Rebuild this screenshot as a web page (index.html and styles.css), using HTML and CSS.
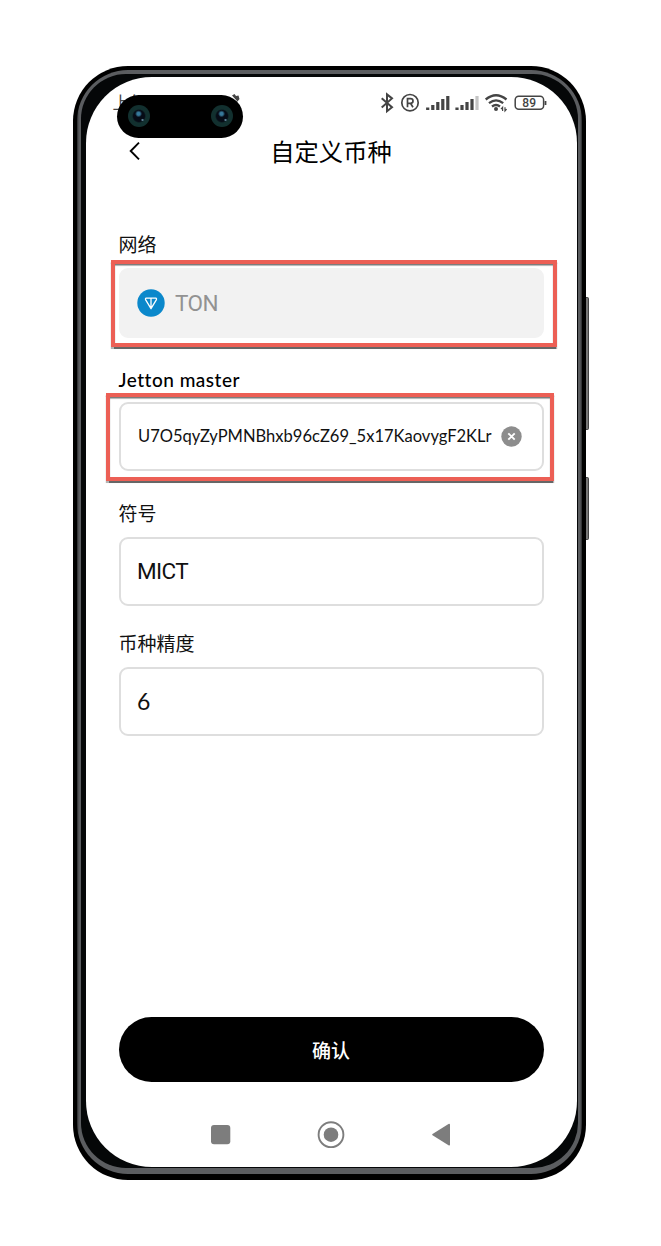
FILE: index.html
```
<!DOCTYPE html>
<html lang="zh-CN">
<head>
<meta charset="utf-8">
<title>自定义币种</title>
<link rel="stylesheet" href="styles.css">
</head>
<body>
<div class="device">
  <span class="side-key volume"></span>
  <span class="side-key power"></span>
  <div class="band"><div class="bezel"><main class="screen">
    <div class="status">
      <span class="clock">上午</span>
      <svg class="bell" width="10" height="10" viewBox="0 0 10 10"><path d="M1 1.5 3.5 0 5 2 7.5 1.5 8.5 5 6.5 7.5Z" fill="#444"/></svg>
      <div class="cutout">
        <span class="lens"></span><span class="lens"></span>
      </div>
      <svg class="status-icons" width="168" height="22" viewBox="380 92 168 22" fill="none" stroke="#444" stroke-width="1.7">
        <path d="M381.7 98.2 392 107.3 387 111.2V94.4L392 98.4 381.7 107.5" stroke-width="2"/>
        <circle cx="410" cy="102.7" r="8.2"/>
        <path d="M407.5 107.2V98.7H410.5Q413 98.7 413 101T410.5 103.3H407.5M410.5 103.3 413 107.2"/>
        <g stroke-width="3.2">
          <path d="M427.7 110V107.5M432.8 110V105M437.8 110V102M442.8 110V99M447.8 110V96"/>
          <path d="M457 110V107.5M462 110V105M467 110V102M472 110V99"/>
          <path d="M477 110V96" stroke="#c4c4c4"/>
        </g>
        <g stroke-width="2.3">
          <path d="M485.7 99.5Q496 91 506.5 99.5M489 103.2Q496 97.5 503.2 103.2M492 106.5Q496 103.5 500 106.5"/>
        </g>
        <circle cx="496" cy="109" r="2" fill="#444" stroke="none"/>
        <path d="M502.6 111V107.3L501 109.2M505 107.3V111L506.6 109.2" stroke-width="1.2"/>
        <rect x="515.2" y="96.2" width="28.4" height="13" rx="3.5" stroke-width="1.5"/>
        <path d="M545.5 101V105" stroke-width="1.8"/>
        <text class="battery" x="529.3" y="107" text-anchor="middle">89</text>
      </svg>
    </div>
    <header class="header">
      <svg class="back" width="12" height="20" viewBox="0 0 12 20"><path d="M10 1.7 1.7 10 10 18.3" fill="none" stroke="#000" stroke-width="1.9"/></svg>
      <h1 class="title">自定义币种</h1>
    </header>
    <form class="form">
      <label class="label">网络</label>
      <div class="field disabled">
        <svg width="28" height="28" viewBox="0 0 28 28"><circle cx="14" cy="14" r="13.7" fill="#0b88cb"/><path d="M9.3 9.2H18.7Q20 9.5 19.3 10.9L14 19.7 8.7 10.9Q8 9.5 9.3 9.2ZM14 9.2V19" fill="none" stroke="#fff" stroke-width="1.3" stroke-linejoin="round"/></svg>
        <span class="network">TON</span>
        <span class="highlight first"></span>
      </div>
      <label class="label latin">Jetton master</label>
      <div class="field master">
        <span class="address">U7O5qyZyPMNBhxb96cZ69_5x17KaovygF2KLr</span>
        <svg class="clear" width="21" height="21" viewBox="0 0 21 21"><circle cx="10.5" cy="10.5" r="10.2" fill="#8d8d8d"/><path d="M7.3 7.3 13.7 13.7M13.7 7.3 7.3 13.7" stroke="#fff" stroke-width="1.9"/></svg>
        <span class="highlight second"></span>
      </div>
      <label class="label">符号</label>
      <div class="field short"><span class="symbol">MICT</span></div>
      <label class="label">币种精度</label>
      <div class="field short"><span class="digits">6</span></div>
      <button class="confirm" type="button">确认</button>
    </form>
    <nav class="nav">
      <svg width="242" height="28" viewBox="0 0 242 28" fill="#7d7d7d"><rect x="2" y="4" width="19.3" height="19.3" rx="3"/><circle cx="122" cy="13.7" r="12.4" fill="none" stroke="#7d7d7d" stroke-width="1.9"/><circle cx="122" cy="13.7" r="7.3"/><path d="M223.5 13.1 239.5 3Q241 2.4 241 4V23.4Q241 25 239.5 24.3L223.5 14.3Q222.7 13.7 223.5 13.1Z"/></svg>
    </nav>
  </main></div></div>
</div>
</body>
</html>
```
FILE: styles.css
```
* { box-sizing: border-box; }
body {
  margin: 0;
  padding: 66px 0 0 73px;
  background: #fff;
  color: #111;
  font-family: Lato, "Noto Sans CJK SC", sans-serif;
}
.device {
  position: relative;
  width: 513px;
  height: 1114px;
  padding: 3.5px 4.5px 6px 4px;
  border-radius: 55px;
  background: #000;
}
.side-key {
  position: absolute;
  right: -3px;
  width: 3px;
  border: 1px solid #444;
  border-left: 0;
  border-radius: 0 2px 2px 0;
  background: #777;
}
.volume { top: 231px; height: 133px; }
.power { top: 411px; height: 63px; }
.band {
  height: 100%;
  padding: 4.5px 4px 6px;
  border-radius: 51px;
  background: linear-gradient(90deg, #27282a, #5b5d60 2px, #5b5d60 calc(100% - 2px), #27282a);
}
.bezel {
  height: 100%;
  padding: 2.5px 1px 1px 4.5px;
  border-radius: 45px;
  background: #050708;
}
.screen {
  display: flex;
  flex-direction: column;
  height: 100%;
  border-radius: 66px;
  background: #fff;
}
.status {
  position: relative;
  display: flex;
  justify-content: flex-end;
  height: 52px;
  padding: 15px 29px 0 0;
}
.clock {
  position: absolute;
  left: 27px;
  top: 14px;
  color: #444;
  font-size: 17px;
  line-height: 24px;
}
.bell { position: absolute; left: 145px; top: 17px; }
.cutout {
  position: absolute;
  left: 31.5px;
  top: 18px;
  display: flex;
  align-items: center;
  justify-content: space-between;
  width: 125.5px;
  height: 43px;
  padding: 0 9.5px 0 10.5px;
  border-radius: 22px;
  background: #000;
}
.lens {
  width: 22px;
  height: 22px;
  border-radius: 50%;
  background: radial-gradient(circle at 66% 68%, #5b7d92 0 .7px, transparent 1.5px), radial-gradient(circle at 48% 40%, #37799b 0 1.5px, transparent 3.5px), radial-gradient(circle, #060b16 0 5.5px, #12302f 7px);
}
.battery {
  fill: #444;
  stroke: none;
  font: 500 12px Roboto, sans-serif;
  letter-spacing: .3px;
}
.header {
  display: grid;
  grid-template-columns: 50px 1fr 50px;
  align-items: center;
  height: 46px;
}
.back { margin-left: 43.5px; margin-top: -2px; }
.title {
  margin: 0;
  color: #000;
  font-size: 24.3px;
  font-weight: 400;
  line-height: 36px;
  text-align: center;
}
.form {
  display: flex;
  flex-direction: column;
  padding: 53px 33px 0 33px;
}
.label {
  height: 40px;
  padding-top: 4px;
  font-size: 19px;
  line-height: 26px;
}
.label.latin {
  padding-top: 5px;
  color: #000;
  font-weight: 500;
  font-variant-ligatures: none;
  letter-spacing: .5px;
}
.field {
  position: relative;
  display: flex;
  align-items: center;
  height: 69px;
  margin-bottom: 25px;
  padding: 0 17px 0 16.5px;
  border: 2px solid #dedede;
  border-radius: 9px;
  font-size: 23px;
}
.field.disabled { height: 70px; border-color: #f2f2f2; background: #f2f2f2; }
.field.master { margin-bottom: 26px; }
.field.short { margin-bottom: 21px; }
.field.disabled { margin-bottom: 24px; }
.network {
  margin-left: 10px;
  color: #929292;
  font: 400 22.5px Roboto, sans-serif;
  letter-spacing: -.5px;
}
.symbol {
  font: 400 22.5px Roboto, sans-serif;
  letter-spacing: -.6px;
}
.address {
  padding-left: 1px;
  font-size: 16.55px;
  white-space: nowrap;
}
.clear { position: absolute; right: 19.5px; }
.highlight {
  position: absolute;
  border: 4px solid #ec5f55;
  box-shadow: 0 1.5px 1px #666, inset 0 1.5px 1px #777;
}
.highlight.first { inset: -10px -15.5px -11px -10px; }
.highlight.second { inset: -11px -12.5px -12px -14.5px; }
.confirm {
  height: 65px;
  margin-top: 260px;
  border: 0;
  border-radius: 33px;
  background: #000;
  color: #fff;
  font: 500 19px "Noto Sans CJK SC", sans-serif;
}
.nav {
  display: flex;
  justify-content: center;
  margin-top: auto;
  padding: 0 2px 18px 0;
}
```
